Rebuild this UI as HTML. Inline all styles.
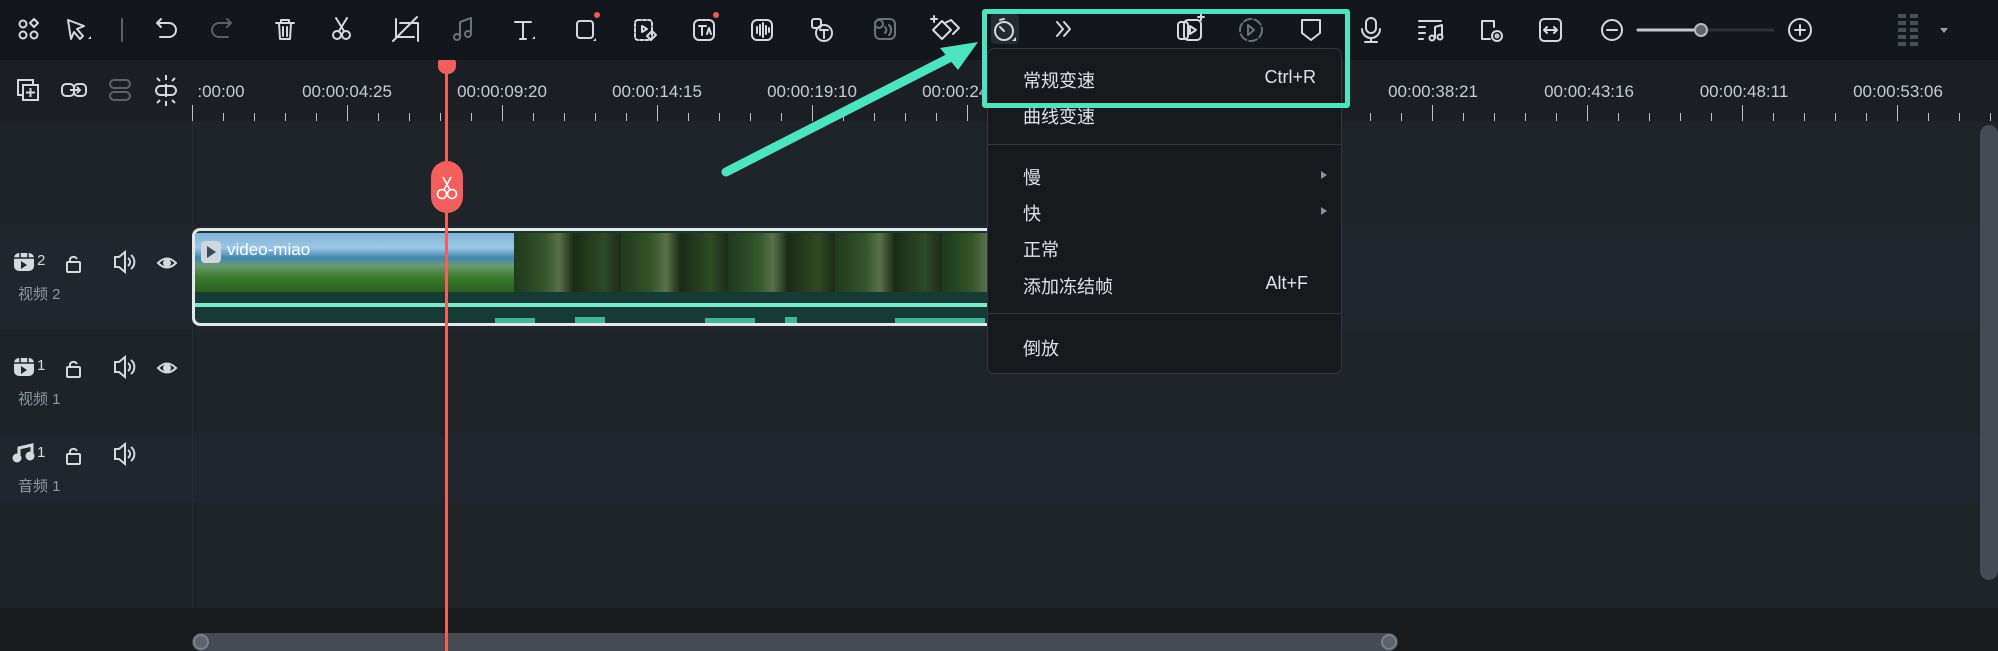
<!DOCTYPE html>
<html><head><meta charset="utf-8"><style>
*{margin:0;padding:0;box-sizing:border-box}
body{width:1998px;height:651px;overflow:hidden;background:#1f2428;font-family:"Liberation Sans","Noto Sans CJK SC",sans-serif;position:relative}
.a{position:absolute}
.tc{position:absolute;top:82px;color:#c5ccd3;font-size:17px;white-space:nowrap;transform:translateX(-50%)}
.mi{position:absolute;left:36px;color:#dfe3e7;font-size:18px;font-family:"Liberation Sans","Noto Sans CJK SC",sans-serif}
.sc{position:absolute;right:26px;color:#dfe3e7;font-size:18px}
.lab{position:absolute;left:18px;color:#8d99a6;font-size:15px}
svg.i{position:absolute;overflow:visible}
</style></head><body>
<!-- toolbar -->
<div class="a" style="left:0;top:0;width:1998px;height:60px;background:#13171b"></div>
<!-- ruler -->
<div class="a" style="left:0;top:60px;width:1998px;height:61px;background:#1b1f23"></div>
<!-- left panel rows -->
<div class="a" style="left:0;top:121px;width:192px;height:487px;background:#1e2328"></div>
<div class="a" style="left:0;top:225px;width:1980px;height:104px;background:#20262d"></div>
<div class="a" style="left:0;top:435px;width:1980px;height:67px;background:#20262d"></div>
<div class="a" style="left:192px;top:121px;width:1px;height:487px;background:#262c31"></div>
<!-- bottom -->
<div class="a" style="left:0;top:608px;width:1998px;height:43px;background:#181b1e"></div>
<div class="a" style="left:192px;top:633px;width:1206px;height:18px;background:#444b53;border-radius:9px"></div>
<div class="a" style="left:193px;top:634px;width:16px;height:16px;border-radius:50%;background:#5c646c;border:2px solid #7a828a"></div>
<div class="a" style="left:1381px;top:634px;width:16px;height:16px;border-radius:50%;background:#5c646c;border:2px solid #7a828a"></div>
<div class="a" style="left:1980px;top:125px;width:18px;height:455px;background:#444b53;border-radius:9px"></div>

<!-- ruler ticks -->
<svg class="i" style="left:0;top:100px" width="1998" height="22">
<g stroke="#b9c0c7" stroke-width="1">
<path d="M192.5 5V21M347.5 5V21M502.5 5V21M657.5 5V21M812.5 5V21M967.5 5V21M1122.5 5V21M1277.5 5V21M1432.5 5V21M1587.5 5V21M1742.5 5V21M1897.5 5V21"/>
<path d="M223.5 13V21M254.5 13V21M285.5 13V21M316.5 13V21M378.5 13V21M409.5 13V21M440.5 13V21M471.5 13V21M533.5 13V21M564.5 13V21M595.5 13V21M626.5 13V21M688.5 13V21M719.5 13V21M750.5 13V21M781.5 13V21M843.5 13V21M874.5 13V21M905.5 13V21M936.5 13V21M1370.5 13V21M1401.5 13V21M1463.5 13V21M1494.5 13V21M1525.5 13V21M1556.5 13V21M1618.5 13V21M1649.5 13V21M1680.5 13V21M1711.5 13V21M1773.5 13V21M1804.5 13V21M1835.5 13V21M1866.5 13V21M1928.5 13V21M1959.5 13V21M1990.5 13V21"/>
</g></svg>
<div class="tc" style="left:221px">:00:00</div>
<div class="tc" style="left:347px">00:00:04:25</div>
<div class="tc" style="left:502px">00:00:09:20</div>
<div class="tc" style="left:657px">00:00:14:15</div>
<div class="tc" style="left:812px">00:00:19:10</div>
<div class="tc" style="left:967px">00:00:24:05</div>
<div class="tc" style="left:1433px">00:00:38:21</div>
<div class="tc" style="left:1589px">00:00:43:16</div>
<div class="tc" style="left:1744px">00:00:48:11</div>
<div class="tc" style="left:1898px">00:00:53:06</div>

<!-- ruler left icons -->
<svg class="i" style="left:0;top:60px" width="192" height="60" fill="none" stroke="#d5d9dd" stroke-width="2">
<rect x="18" y="20" width="15" height="15"/><rect x="23" y="25" width="15" height="15" fill="#1b1f23"/><path d="M30.5 28v9M26 32.5h9"/>
<rect x="62" y="24" width="12" height="12" rx="4"/><rect x="74" y="24" width="12" height="12" rx="4"/><path d="M70 30h10m-3-3 3 3-3 3"/>
<g stroke="#5b6268"><rect x="110" y="20" width="20" height="8" rx="4"/><rect x="110" y="32" width="20" height="8" rx="4"/></g>
<rect x="156" y="26" width="20" height="9" rx="4.5"/><path d="M166 24v13M166 15v5M166 41v5M157 18l3 3M175 18l-3 3M157 43l3-3M175 43l-3-3"/>
</svg>

<!-- toolbar icons -->
<svg class="i" style="left:0;top:0" width="1998" height="60" fill="none" stroke="#d5d9dd" stroke-width="2" stroke-linecap="round" stroke-linejoin="round">
<circle cx="23" cy="35" r="3.5"/><circle cx="34" cy="35" r="3.5"/><circle cx="23" cy="24" r="3.5"/><path d="M34 19l4 4-4 4-4-4z"/>
<path d="M68 20l16 6-7 3 6 7-3 3-6-7-3 7z"/><path d="M88 39h3v-3" fill="#d5d9dd" stroke="none"/>
<path d="M122 19v22" stroke="#5a6066"/>
<path d="M157 23h12a7 7 0 0 1 0 14h-9M157 23l4-4M157 23l4 4"/>
<path d="M231 23h-12a7 7 0 0 0 0 14h9M231 23l-4-4M231 23l-4 4" stroke="#5a6066"/>
<path d="M276 23h18M281 23v-3h8v3M279 23l1 16h10l1-16M283 27v9M287 27v9"/>
<circle cx="337" cy="35" r="4"/><circle cx="346" cy="35" r="4"/><path d="M339 31l8-13M344 31l-8-13"/>
<path d="M396 19v18h18M400 23h18v18M393 41l24-24"/>
<g stroke="#6b7278"><path d="M460 37V22l11-4v15"/><circle cx="457" cy="37" r="3"/><circle cx="468" cy="34" r="3"/></g>
<path d="M515 22h16M523 22v17M520 39h6"/><path d="M532 39h3v-3" fill="#d5d9dd" stroke="none"/>
<rect x="577" y="21" width="16" height="17" rx="3"/><path d="M593 41h3v-3" fill="#d5d9dd" stroke="none"/>
<circle cx="597" cy="15" r="3" fill="#f05a5a" stroke="none"/>
<rect x="635" y="20" width="17" height="20" rx="3" stroke-dasharray="3 2"/><path d="M642 26l5 3-5 3z"/><path d="M647 36l5-5 4 4-5 5z"/>
<rect x="694" y="20" width="20" height="20" rx="5"/><path d="M699 26h7M702 26v9M707 34l2-6 2 6"/><circle cx="716" cy="15" r="3" fill="#f05a5a" stroke="none"/>
<rect x="752" y="20" width="20" height="20" rx="5"/><path d="M757 27v6M760 25v10M763 23v14M766 26v8M769 28v4"/>
<rect x="812" y="19" width="9" height="9" rx="2"/><circle cx="824" cy="33" r="8"/><path d="M820 30h8M824 30v8"/>
<g stroke="#6b7278"><rect x="875" y="19" width="20" height="20" rx="5"/><circle cx="879" cy="24" r="4"/><path d="M885 33a4 4 0 0 0 0-6M889 35a7 7 0 0 0 0-10"/></g>
<path d="M933 30l9-9 9 9-9 9z"/><path d="M945 23l6-3 8 8-6 6" /><path d="M934 16v6M931 19h6"/>
<!-- speed icon highlighted -->
<rect x="991" y="14" width="28" height="30" rx="4" fill="#262b31" stroke="none"/>
<circle cx="1004" cy="31" r="9"/><path d="M1000 20a11 11 0 0 1 4-1M1004 31l-4-4"/><path d="M1012 41h4v-4" fill="#d5d9dd" stroke="none"/>
<path d="M1057 22l6 7-6 7M1064 22l6 7-6 7"/>
<rect x="1178" y="22" width="10" height="17" rx="3"/><rect x="1184" y="20" width="17" height="20" rx="4"/><path d="M1190 26l6 4-6 4z"/><path d="M1201 14v6M1198 17h6"/>
<g stroke="#6b7278"><circle cx="1251" cy="30" r="11" stroke-dasharray="8 3"/><path d="M1248 25l6 5-6 5z"/></g>
<path d="M1302 20h18v13l-9 7-9-7z"/>
<rect x="1366" y="18" width="10" height="15" rx="5"/><path d="M1362 29a9 9 0 0 0 18 0M1371 38v3M1365 42h12"/>
<path d="M1419 21h22M1419 27h6M1419 33h6M1419 39h4M1435 38v-11l7-2v11"/><circle cx="1432" cy="38" r="2.5"/><circle cx="1440" cy="37" r="2.5"/>
<path d="M1482 38V21h12v6"/><path d="M1490 39h-8" /><circle cx="1497" cy="36" r="5"/><circle cx="1497" cy="36" r="1.5"/>
<rect x="1540" y="19" width="21" height="22" rx="4"/><path d="M1544 30h13M1547 27l-3 3 3 3M1554 27l3 3-3 3"/>
<circle cx="1612" cy="30" r="10"/><path d="M1607 30h10"/>
<path d="M1638 30h63" stroke="#c4c9ce" stroke-width="3"/><path d="M1701 30h72" stroke="#2c3237" stroke-width="3"/>
<circle cx="1701" cy="30" r="6" fill="#5e666e" stroke="#b5bbc1"/>
<circle cx="1800" cy="30" r="11"/><path d="M1795 30h10M1800 25v10"/>
<g fill="#4a5056" stroke="none"><rect x="1898" y="14" width="8" height="4"/><rect x="1910" y="14" width="8" height="4"/><rect x="1898" y="21" width="8" height="4"/><rect x="1910" y="21" width="8" height="4"/><rect x="1898" y="28" width="8" height="4"/><rect x="1910" y="28" width="8" height="4"/><rect x="1898" y="35" width="8" height="4"/><rect x="1910" y="35" width="8" height="4"/><rect x="1898" y="42" width="8" height="4"/><rect x="1910" y="42" width="8" height="4"/></g>
<path d="M1940 28h8l-4 5z" fill="#9aa0a6" stroke="none"/>
</svg>

<!-- track headers -->
<svg class="i" style="left:0;top:0" width="192" height="500" fill="none" stroke="#d5d9dd" stroke-width="2">
<g id="v"><rect x="14" y="253" width="20" height="18" rx="5" fill="#d5d9dd" stroke="none"/><path d="M14 258h20M20 253v5M28 253v5" stroke="#20262d" stroke-width="1.5"/><path d="M21 261l6 4-6 4z" fill="#20262d" stroke="none"/></g>
<rect x="67" y="262" width="13" height="10" rx="1"/><path d="M70 262v-3a4 4 0 0 1 7 0"/>
<path d="M115 257h4l6-5v20l-6-5h-4z"/><path d="M128 258a5 5 0 0 1 0 8M131 255a9 9 0 0 1 0 14"/>
<path d="M158 263q9-9 18 0q-9 9-18 0z"/><circle cx="167" cy="263" r="3" fill="#d5d9dd"/>
<g transform="translate(0,105)"><rect x="14" y="253" width="20" height="18" rx="5" fill="#d5d9dd" stroke="none"/><path d="M14 258h20M20 253v5M28 253v5" stroke="#20262d" stroke-width="1.5"/><path d="M21 261l6 4-6 4z" fill="#20262d" stroke="none"/>
<rect x="67" y="262" width="13" height="10" rx="1"/><path d="M70 262v-3a4 4 0 0 1 7 0"/>
<path d="M115 257h4l6-5v20l-6-5h-4z"/><path d="M128 258a5 5 0 0 1 0 8M131 255a9 9 0 0 1 0 14"/>
<path d="M158 263q9-9 18 0q-9 9-18 0z"/><circle cx="167" cy="263" r="3" fill="#d5d9dd"/></g>
<g transform="translate(0,192)"><path d="M19 264v-8l13-3v10" stroke-width="3"/><circle cx="17" cy="266" r="3.5" fill="#d5d9dd"/><circle cx="30" cy="264" r="3.5" fill="#d5d9dd"/>
<rect x="67" y="262" width="13" height="10" rx="1"/><path d="M70 262v-3a4 4 0 0 1 7 0"/>
<path d="M115 257h4l6-5v20l-6-5h-4z"/><path d="M128 258a5 5 0 0 1 0 8M131 255a9 9 0 0 1 0 14"/></g>
</svg>
<div class="a" style="left:37px;top:252px;color:#d5d9dd;font-size:15px">2</div>
<div class="a" style="left:37px;top:357px;color:#d5d9dd;font-size:15px">1</div>
<div class="a" style="left:37px;top:444px;color:#d5d9dd;font-size:15px">1</div>
<div class="lab" style="top:283px">视频 2</div>
<div class="lab" style="top:388px">视频 1</div>
<div class="lab" style="top:475px">音频 1</div>

<!-- clip -->
<div class="a" style="left:192px;top:228px;width:810px;height:98px;border:3px solid #e6e9ec;border-right:none;border-radius:8px 0 0 8px;background:#163b35;overflow:hidden">
 <div class="a" style="left:0;top:2px;width:319px;height:59px;background:linear-gradient(180deg,#7fb3d8 0%,#9cc7e3 25%,#3f87b3 42%,#6a9a72 55%,#3b7a2e 75%,#2b5e22 100%)"></div>
 <div class="a" style="left:319px;top:2px;width:490px;height:59px;background:repeating-linear-gradient(90deg,#1f3a1c 0,#34542a 30px,#5a7048 45px,#1a2a16 60px,#2f4a26 90px,#1c2b18 107px)"></div>
 <div class="a" style="left:6px;top:10px;width:20px;height:22px;border-radius:4px;background:#cfd6dc"></div>
 <div class="a" style="left:12px;top:15px;width:0;height:0;border-left:9px solid #3b4a58;border-top:6px solid transparent;border-bottom:6px solid transparent"></div>
 <div class="a" style="left:32px;top:9px;color:#fff;font-size:17px">video-miao</div>
 <div class="a" style="left:0;top:72px;width:810px;height:4px;background:#7ee8cc"></div>
 <svg class="a" style="left:0;top:82px" width="810" height="12"><g fill="#3fb797"><rect x="300" y="5" width="40" height="6"/><rect x="380" y="4" width="30" height="7"/><rect x="510" y="5" width="50" height="6"/><rect x="590" y="4" width="12" height="7"/><rect x="700" y="5" width="90" height="6"/></g></svg>
</div>

<!-- playhead -->
<div class="a" style="left:445px;top:60px;width:3px;height:591px;background:#f25f5c"></div>
<div class="a" style="left:438px;top:60px;width:18px;height:14px;background:#f25f5c;border-radius:2px 2px 8px 8px"></div>
<div class="a" style="left:431px;top:161px;width:32px;height:52px;background:#f25f5c;border-radius:16px"></div>
<svg class="i" style="left:431px;top:161px" width="32" height="52" fill="none" stroke="#fff" stroke-width="1.6"><circle cx="11" cy="33" r="4.5"/><circle cx="21" cy="33" r="4.5"/><path d="M13 29l7-13M19 29l-7-13"/></svg>

<!-- menu -->
<div class="a" style="left:987px;top:48px;width:355px;height:326px;background:#17191c;border:1px solid #33383d;border-radius:7px"></div>
<div class="a" style="left:988px;top:144px;width:353px;height:1px;background:#33383d"></div>
<div class="a" style="left:988px;top:313px;width:353px;height:1px;background:#33383d"></div>
<div class="a" style="left:987px;top:48px;width:355px;height:326px">
 <div class="mi" style="top:19px">常规变速</div><div class="sc" style="top:19px">Ctrl+R</div>
 <div class="mi" style="top:55px">曲线变速</div>
 <div class="mi" style="top:116px">慢</div>
 <div class="mi" style="top:152px">快</div>
 <div class="mi" style="top:188px">正常</div>
 <div class="mi" style="top:225px">添加冻结帧</div><div class="sc" style="top:225px;right:34px">Alt+F</div>
 <div class="mi" style="top:287px">倒放</div>
 <div class="a" style="left:334px;top:123px;border-left:6px solid #8a9096;border-top:4px solid transparent;border-bottom:4px solid transparent"></div>
 <div class="a" style="left:334px;top:159px;border-left:6px solid #8a9096;border-top:4px solid transparent;border-bottom:4px solid transparent"></div>
</div>

<!-- annotation -->
<div class="a" style="left:982px;top:9px;width:368px;height:99px;border:5px solid #4de3c0;border-radius:3px"></div>
<svg class="i" style="left:0;top:0" width="1998" height="651">
<path d="M726 172L955 55" stroke="#4de3c0" stroke-width="9" stroke-linecap="round"/>
<path d="M978 42L940 48L958 70Z" fill="#4de3c0"/>
</svg>
</body></html>
